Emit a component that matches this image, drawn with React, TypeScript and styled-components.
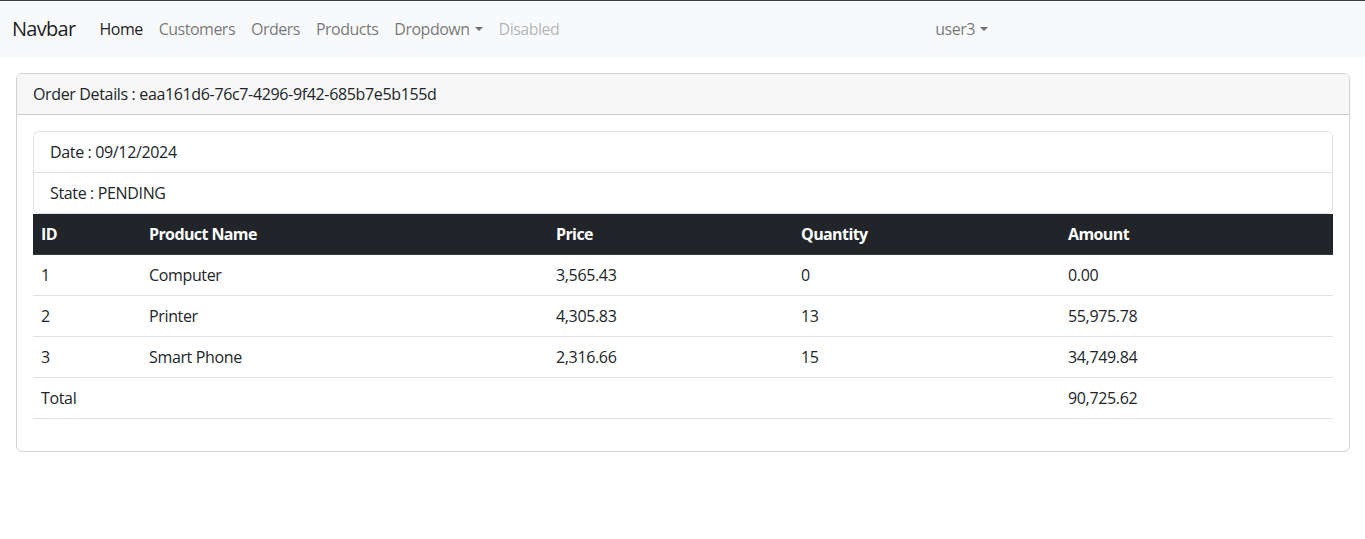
import styled, { createGlobalStyle } from "styled-components";

const GlobalStyle = createGlobalStyle`
  * { box-sizing: border-box; }
  body {
    margin: 0;
    font-family: "Open Sans", "Noto Sans", sans-serif;
    font-size: 16px;
    line-height: 24px;
    letter-spacing: -0.35px;
    color: #212529;
    background: #fff;
    border-top: 1px solid #3c3c3c;
  }
`;

const Navbar = styled.nav`
  display: flex;
  align-items: center;
  height: 56px;
  padding: 0 12px;
  background: #f8f9fa;
`;

const Brand = styled.a`
  font-size: 20px;
  line-height: 30px;
  letter-spacing: -0.7px;
  margin-right: 16px;
  color: rgba(0, 0, 0, 0.9);
  text-decoration: none;
`;

const NavList = styled.ul`
  display: flex;
  list-style: none;
  margin: 0;
  padding: 0;
  letter-spacing: -0.5px;
`;

const Spacer = styled.div`
  flex: 0 0 360px;
`;

const NavLink = styled.a<{ $state?: "active" | "disabled" }>`
  display: block;
  padding: 8px;
  text-decoration: none;
  color: ${(p) =>
    p.$state === "active"
      ? "rgba(0,0,0,0.9)"
      : p.$state === "disabled"
      ? "rgba(0,0,0,0.3)"
      : "rgba(0,0,0,0.55)"};
`;

const Toggle = styled(NavLink)`
  &::after {
    content: "";
    display: inline-block;
    margin-left: 5px;
    vertical-align: 4px;
    border-top: 4.5px solid;
    border-left: 4px solid transparent;
    border-right: 4px solid transparent;
  }
`;

const Main = styled.main`
  padding: 16px 15px 16px 16px;
`;

const Card = styled.section`
  border: 1px solid rgba(0, 0, 0, 0.175);
  border-radius: 6px;
  overflow: hidden;
`;

const CardHeader = styled.div`
  padding: 8px 16px;
  background: #f7f7f7;
  border-bottom: 1px solid rgba(0, 0, 0, 0.175);
`;

const CardBody = styled.div`
  padding: 16px;
`;

const ListGroup = styled.ul`
  list-style: none;
  margin: 0;
  padding: 0;
  border: 1px solid #dee2e6;
  border-radius: 6px;
`;

const ListItem = styled.li`
  padding: 8px 16px;
  & + & {
    border-top: 1px solid #dee2e6;
  }
`;

const Table = styled.table`
  width: 100%;
  border-collapse: collapse;
  margin-bottom: 16px;
`;

const Th = styled.th<{ $w: number }>`
  width: ${(p) => p.$w}px;
  padding: 8px;
  text-align: left;
  font-weight: 700;
  letter-spacing: -0.6px;
  color: #fff;
  background: #212529;
  border-bottom: 1px solid #373b3e;
`;

const Td = styled.td`
  padding: 8px;
  border-bottom: 1px solid #dee2e6;
`;

const columns = [
  { label: "ID", w: 108 },
  { label: "Product Name", w: 407 },
  { label: "Price", w: 245 },
  { label: "Quantity", w: 267 },
  { label: "Amount", w: 273 },
];

const items = [
  { id: 1, name: "Computer", price: "3,565.43", qty: 0, amount: "0.00" },
  { id: 2, name: "Printer", price: "4,305.83", qty: 13, amount: "55,975.78" },
  { id: 3, name: "Smart Phone", price: "2,316.66", qty: 15, amount: "34,749.84" },
];

export default function App() {
  return (
    <>
      <GlobalStyle />
      <Navbar>
        <Brand href="#">Navbar</Brand>
        <NavList>
          <li><NavLink $state="active" href="#">Home</NavLink></li>
          <li><NavLink href="#">Customers</NavLink></li>
          <li><NavLink href="#">Orders</NavLink></li>
          <li><NavLink href="#">Products</NavLink></li>
          <li><Toggle href="#">Dropdown</Toggle></li>
          <li><NavLink $state="disabled">Disabled</NavLink></li>
        </NavList>
        <Spacer />
        <NavList>
          <li><Toggle href="#">user3</Toggle></li>
        </NavList>
      </Navbar>
      <Main>
        <Card>
          <CardHeader>Order Details : eaa161d6-76c7-4296-9f42-685b7e5b155d</CardHeader>
          <CardBody>
            <ListGroup>
              <ListItem>Date : 09/12/2024</ListItem>
              <ListItem>State : PENDING</ListItem>
            </ListGroup>
            <Table>
              <thead>
                <tr>
                  {columns.map((c) => (
                    <Th key={c.label} $w={c.w}>{c.label}</Th>
                  ))}
                </tr>
              </thead>
              <tbody>
                {items.map((it) => (
                  <tr key={it.id}>
                    <Td>{it.id}</Td>
                    <Td>{it.name}</Td>
                    <Td>{it.price}</Td>
                    <Td>{it.qty}</Td>
                    <Td>{it.amount}</Td>
                  </tr>
                ))}
                <tr>
                  <Td>Total</Td>
                  <Td />
                  <Td />
                  <Td />
                  <Td>90,725.62</Td>
                </tr>
              </tbody>
            </Table>
          </CardBody>
        </Card>
      </Main>
    </>
  );
}
